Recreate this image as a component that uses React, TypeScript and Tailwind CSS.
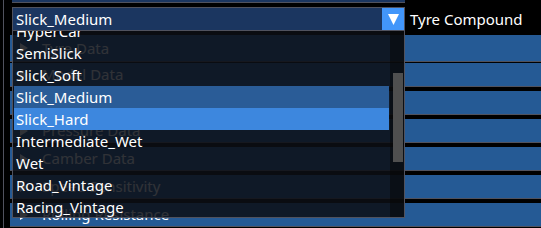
import React from 'react'

const headers = [
  'Tyre Data',
  'Model Data',
  'Thermal Data',
  'Pressure Data',
  'Camber Data',
  'Speed Sensitivity',
  'Rolling Resistance',
]

const compounds = [
  'HyperCar',
  'SemiSlick',
  'Slick_Soft',
  'Slick_Medium',
  'Slick_Hard',
  'Intermediate_Wet',
  'Wet',
  'Road_Vintage',
  'Racing_Vintage',
]

function Arrow({ down }: { down?: boolean }) {
  return down ? (
    <svg width="11" height="11" viewBox="0 0 11 11">
      <polygon points="0,0 11,0 5.5,11" fill="#ffffff" />
    </svg>
  ) : (
    <svg width="8" height="10" viewBox="0 0 8 10">
      <polygon points="0,0 8,5 0,10" fill="#ffffff" />
    </svg>
  )
}

export default function App() {
  const selected = 'Slick_Medium'
  const hovered = 'Slick_Hard'

  return (
    <div
      className="relative w-[541px] h-[228px] bg-black overflow-hidden text-white text-[15px] leading-none"
      style={{ fontFamily: '"Noto Sans", "Open Sans", sans-serif' }}
    >
      <div className="flex h-full">
        <div className="ml-[3px] h-full border-l border-[#50525e]" />
        <div className="flex-1 flex flex-col pl-[6px]">
          {/* previous item */}
          <div className="ml-[2px] w-[393px] h-[3px] bg-[#1b3660] border-b border-[#50525e]" />

          {/* combo */}
          <div className="mt-[4px] flex items-center h-[24px]">
            <div className="ml-[2px] w-[393px] h-[24px] flex border border-[#50525e] bg-[#1b3660]">
              <div className="flex-1 flex items-center pl-[3px]">{selected}</div>
              <div className="w-[22px] h-full bg-[#4296fa] flex items-center justify-center">
                <Arrow down />
              </div>
            </div>
            <div className="ml-[5px] whitespace-nowrap">Tyre Compound</div>
          </div>

          {/* collapsing headers */}
          <div className="mt-[4px] flex flex-col">
            {headers.map((h, i) => (
              <div
                key={h}
                className={`flex items-center bg-[#255a95] border-b border-[#50525e] ${
                  i === 0 ? 'h-[27px]' : i === 1 ? 'h-[24px] mt-[1px]' : 'h-[24px] mt-[4px]'
                }`}
              >
                <div className="ml-[10px] w-[8px] flex items-center">
                  <Arrow />
                </div>
                <div className="ml-[14px] whitespace-nowrap">{h}</div>
              </div>
            ))}
          </div>
        </div>
      </div>

      {/* combo popup */}
      <div className="absolute left-[12px] top-[31px] w-[393px] h-[187px] flex border-x border-b border-[#50525e] bg-[rgba(12,14,20,0.85)]">
        <div className="flex-1 overflow-hidden">
          <div className="mt-[-11px] flex flex-col">
            {compounds.map((c) => (
              <div
                key={c}
                className={`ml-[1px] mr-[1px] h-[22px] flex items-center pl-[2px] whitespace-nowrap ${
                  c === hovered ? 'bg-[#3d87de]' : c === selected ? 'bg-[#2a5c97]' : ''
                }`}
              >
                {c}
              </div>
            ))}
          </div>
        </div>
        <div className="w-[14px] h-full bg-[rgba(5,5,5,0.5)]">
          <div className="ml-[3px] mt-[42px] w-[10px] h-[89px] bg-[#4f4f4f]" />
        </div>
      </div>
    </div>
  )
}
